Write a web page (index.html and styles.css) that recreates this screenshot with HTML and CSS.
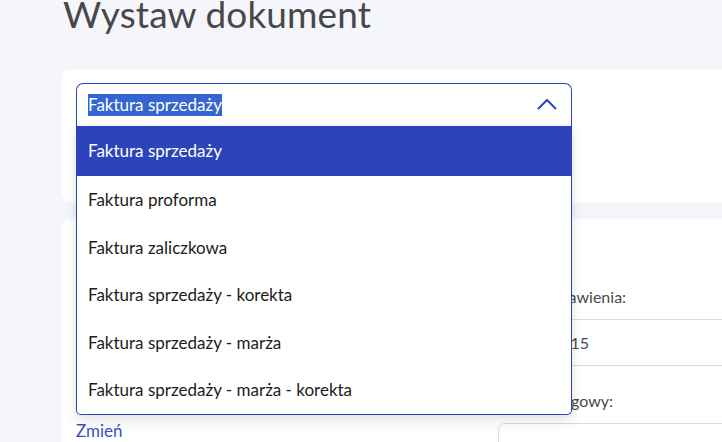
FILE: index.html
```html
<!DOCTYPE html>
<html lang="pl">
<head>
<meta charset="utf-8">
<title>Wystaw dokument</title>
<link rel="stylesheet" href="styles.css">
</head>
<body>
<main class="page">
  <h1 class="title">Wystaw dokument</h1>
  <section class="card card-type">
    <div class="select-wrap">
      <div class="select">
        <span class="select-value">Faktura sprzedaży</span>
        <svg class="chevron" width="20" height="12" viewBox="0 0 20 12" aria-hidden="true">
          <path d="M1.5 10.5 L10 2 L18.5 10.5" fill="none" stroke="#2c44b9" stroke-width="2" stroke-linecap="round" stroke-linejoin="round"/>
        </svg>
      </div>
      <ul class="dropdown">
        <li class="option option-active">Faktura sprzedaży</li>
        <li class="option">Faktura proforma</li>
        <li class="option">Faktura zaliczkowa</li>
        <li class="option">Faktura sprzedaży - korekta</li>
        <li class="option">Faktura sprzedaży - marża</li>
        <li class="option">Faktura sprzedaży - marża - korekta</li>
      </ul>
    </div>
  </section>
  <section class="card card-main">
    <div class="col-left">
      <a class="link" href="#">Zmień</a>
    </div>
    <div class="col-right">
      <label class="label">Data wystawienia:</label>
      <div class="input input-flat">2024-05-15</div>
      <label class="label label-second">Okres księgowy:</label>
      <div class="input input-round"></div>
    </div>
  </section>
</main>
</body>
</html>
```

FILE: styles.css
```css
html, body {
  margin: 0;
  padding: 0;
}
body {
  background: #f5f6fb;
  font-family: "Lato", "Liberation Sans", sans-serif;
  color: #1c1c1c;
  overflow: hidden;
  width: 722px;
  height: 442px;
}
.page {
  padding-left: 62px;
  width: 760px;
}
.title {
  margin: 0 0 42px 1px;
  font-size: 37px;
  font-weight: 400;
  line-height: 28px;
  color: #484848;
  letter-spacing: 0.1px;
}
.card {
  background: #ffffff;
  border-radius: 8px;
}
.card-type {
  height: 132px;
  padding: 13px 14px 0 14px;
  box-sizing: border-box;
  margin-bottom: 17px;
}
.select-wrap {
  position: relative;
  width: 496px;
}
.select {
  height: 43px;
  box-sizing: border-box;
  border: 1px solid #2b44b8;
  border-bottom: none;
  border-radius: 7px 7px 0 0;
  display: flex;
  align-items: center;
  justify-content: space-between;
  padding: 0 14px 0 11px;
  font-size: 17px;
}
.select-value {
  background: #3465d1;
  color: #ffffff;
  line-height: 22px;
}
.chevron {
  display: block;
  margin-top: -2px;
}
.dropdown {
  position: absolute;
  top: 43px;
  left: 0;
  width: 496px;
  box-sizing: border-box;
  margin: 0;
  padding: 0;
  list-style: none;
  background: #ffffff;
  border: 1px solid #2b44b8;
  border-top: none;
  border-radius: 0 0 5px 5px;
  box-shadow: 0 6px 14px rgba(0, 0, 0, 0.10), 0 0 6px rgba(0, 0, 0, 0.05);
  z-index: 10;
}
.option {
  height: 47.6px;
  line-height: 47.6px;
  padding-left: 11px;
  font-size: 17px;
  color: #1c1c1c;
}
.option-active {
  background: #2c44b9;
  color: #ffffff;
  height: 50px;
  line-height: 50px;
}
.card-main {
  display: grid;
  grid-template-columns: 406px 1fr;
  column-gap: 16px;
  padding: 14px;
  height: 300px;
  box-sizing: border-box;
}
.col-left {
  padding-top: 188px;
}
.link {
  color: #3a4fc2;
  text-decoration: none;
  font-size: 17px;
  line-height: 20px;
}
.col-right {
  padding-top: 54px;
  display: flex;
  flex-direction: column;
}
.label {
  font-size: 16px;
  line-height: 20px;
  color: #4a4a4a;
  margin-bottom: 12px;
}
.label-second {
  margin-top: 25px;
}
.input {
  height: 47px;
  box-sizing: border-box;
  border: 1px solid #dcdcdc;
  font-size: 16px;
  color: #4a4a4a;
  padding-left: 5px;
  line-height: 45px;
}
.input-flat {
  border-left: none;
  border-right: none;
}
.input-round {
  border-radius: 7px;
}
```
